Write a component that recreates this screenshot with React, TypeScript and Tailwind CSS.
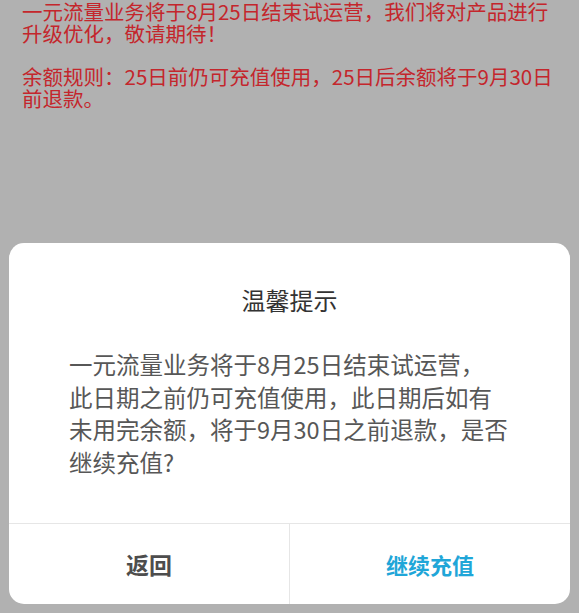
const cjk = "font-['Noto_Sans_CJK_SC','Noto_Sans',sans-serif]";

function Notice() {
  return (
    <div className="pl-[22px] text-[20.5px] leading-[22px] text-[#c4262c] whitespace-nowrap">
      <p>一元流量业务将于8月25日结束试运营，我们将对产品进行</p>
      <p>升级优化，敬请期待！</p>
      <p className="h-[21px]" />
      <p>余额规则：25日前仍可充值使用，25日后余额将于9月30日</p>
      <p>前退款。</p>
    </div>
  );
}

function ConfirmDialog() {
  return (
    <div className="mt-auto mx-[9px] mb-[9px] h-[361px] bg-white rounded-[15px] flex flex-col overflow-hidden">
      <h2 className="pt-[41px] text-center text-[24px] leading-[32px] text-[#333333] font-normal">
        温馨提示
      </h2>
      <p className="mt-[32px] px-[60px] text-[23.5px] leading-[32.5px] text-[#575757] whitespace-nowrap">
        一元流量业务将于8月25日结束试运营，
        <br />
        此日期之前仍可充值使用，此日期后如有
        <br />
        未用完余额，将于9月30日之前退款，是否
        <br />
        继续充值?
      </p>
      <div className="mt-auto h-[81px] border-t border-[#e6e6e6] flex">
        <button className="flex-1 flex items-center justify-center text-[23px] font-bold text-[#4d4d4d]">
          返回
        </button>
        <div className="w-px bg-[#e6e6e6]" />
        <button className="flex-1 flex items-center justify-center text-[22px] font-bold text-[#1fa6d8]">
          继续充值
        </button>
      </div>
    </div>
  );
}

export default function App() {
  return (
    <div className={`${cjk} w-full h-[613px] bg-[#b1b1b1] flex flex-col overflow-hidden`}>
      <Notice />
      <ConfirmDialog />
    </div>
  );
}
